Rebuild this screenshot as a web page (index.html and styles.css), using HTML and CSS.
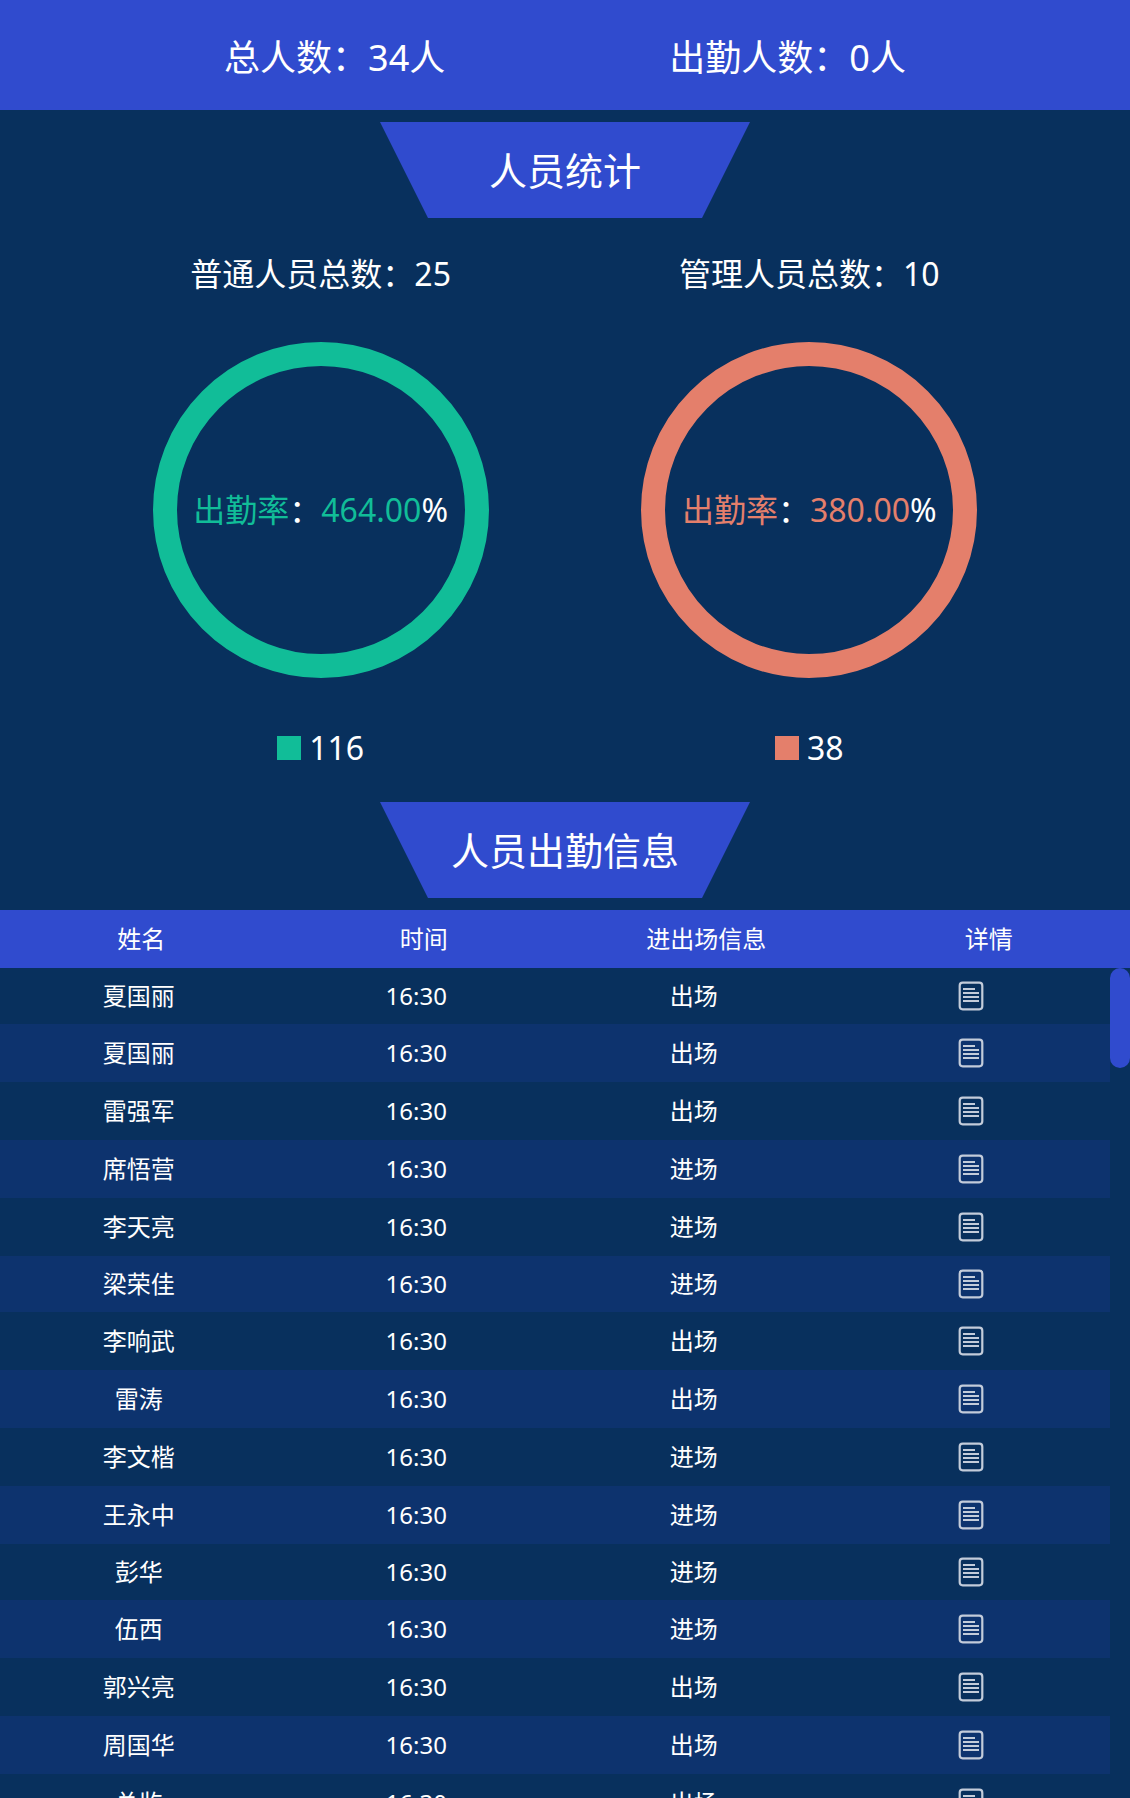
FILE: index.html
```html
<!DOCTYPE html>
<html lang="zh-CN">
<head>
<meta charset="utf-8">
<meta name="viewport" content="width=device-width, initial-scale=1">
<title>人员出勤信息</title>
<link rel="stylesheet" href="styles.css">
</head>
<body>
<svg class="sprite" aria-hidden="true">
  <symbol id="doc" viewBox="0 0 26 30">
    <rect x="1.7" y="1.7" width="22.6" height="26.6" rx="3" fill="none" stroke="currentColor" stroke-width="2.2"/>
    <path d="M5 8H17M5 12H21M5 16H21M5 20H21" fill="none" stroke="currentColor" stroke-width="2.2"/>
  </symbol>
</svg>
<header class="summary">
  <p>总人数：34人</p>
  <p>出勤人数：0人</p>
</header>
<main class="main">
  <h2 class="banner">人员统计</h2>
  <section class="stats">
    <div class="stat stat-green">
      <h3 class="stat-title">普通人员总数：25</h3>
      <div class="ring"><p><span class="tint">出勤率</span>：<span class="tint">464.00</span>%</p></div>
      <p class="legend"><i class="swatch"></i>116</p>
    </div>
    <div class="stat stat-coral">
      <h3 class="stat-title">管理人员总数：10</h3>
      <div class="ring"><p><span class="tint">出勤率</span>：<span class="tint">380.00</span>%</p></div>
      <p class="legend"><i class="swatch"></i>38</p>
    </div>
  </section>
  <h2 class="banner">人员出勤信息</h2>
  <div class="records">
    <table class="table">
      <thead>
        <tr><th>姓名</th><th>时间</th><th>进出场信息</th><th>详情</th></tr>
      </thead>
      <tbody>
        <tr><td>夏国丽</td><td>16:30</td><td>出场</td><td><button class="detail" aria-label="详情"><svg><use href="#doc"/></svg></button></td></tr>
        <tr><td>夏国丽</td><td>16:30</td><td>出场</td><td><button class="detail" aria-label="详情"><svg><use href="#doc"/></svg></button></td></tr>
        <tr><td>雷强军</td><td>16:30</td><td>出场</td><td><button class="detail" aria-label="详情"><svg><use href="#doc"/></svg></button></td></tr>
        <tr><td>席悟营</td><td>16:30</td><td>进场</td><td><button class="detail" aria-label="详情"><svg><use href="#doc"/></svg></button></td></tr>
        <tr><td>李天亮</td><td>16:30</td><td>进场</td><td><button class="detail" aria-label="详情"><svg><use href="#doc"/></svg></button></td></tr>
        <tr><td>梁荣佳</td><td>16:30</td><td>进场</td><td><button class="detail" aria-label="详情"><svg><use href="#doc"/></svg></button></td></tr>
        <tr><td>李响武</td><td>16:30</td><td>出场</td><td><button class="detail" aria-label="详情"><svg><use href="#doc"/></svg></button></td></tr>
        <tr><td>雷涛</td><td>16:30</td><td>出场</td><td><button class="detail" aria-label="详情"><svg><use href="#doc"/></svg></button></td></tr>
        <tr><td>李文楷</td><td>16:30</td><td>进场</td><td><button class="detail" aria-label="详情"><svg><use href="#doc"/></svg></button></td></tr>
        <tr><td>王永中</td><td>16:30</td><td>进场</td><td><button class="detail" aria-label="详情"><svg><use href="#doc"/></svg></button></td></tr>
        <tr><td>彭华</td><td>16:30</td><td>进场</td><td><button class="detail" aria-label="详情"><svg><use href="#doc"/></svg></button></td></tr>
        <tr><td>伍西</td><td>16:30</td><td>进场</td><td><button class="detail" aria-label="详情"><svg><use href="#doc"/></svg></button></td></tr>
        <tr><td>郭兴亮</td><td>16:30</td><td>出场</td><td><button class="detail" aria-label="详情"><svg><use href="#doc"/></svg></button></td></tr>
        <tr><td>周国华</td><td>16:30</td><td>出场</td><td><button class="detail" aria-label="详情"><svg><use href="#doc"/></svg></button></td></tr>
        <tr><td>总监</td><td>16:30</td><td>出场</td><td><button class="detail" aria-label="详情"><svg><use href="#doc"/></svg></button></td></tr>
      </tbody>
    </table>
    <div class="thumb"></div>
  </div>
</main>
</body>
</html>
```

FILE: styles.css
```css
* {
  box-sizing: border-box;
  margin: 0;
  padding: 0;
}

body {
  display: flex;
  flex-direction: column;
  height: 100vh;
  overflow: hidden;
  background: #08305d;
  color: #fff;
  font-family: "Noto Sans", "Noto Sans CJK SC", sans-serif;
  font-size: 24px;
}

h2,
h3,
th {
  font-weight: 400;
}

.sprite {
  display: none;
}

.summary {
  display: flex;
  flex: none;
  justify-content: space-evenly;
  align-items: center;
  height: 110px;
  background: #304bce;
  font-size: 36px;
}

.main {
  display: flex;
  flex: 1;
  flex-direction: column;
  min-height: 0;
  padding-top: 12px;
}

.banner {
  flex: none;
  align-self: center;
  width: 370px;
  background: #304bce;
  clip-path: polygon(0 0, 100% 0, calc(100% - 48px) 100%, 48px 100%);
  font-size: 38px;
  line-height: 96px;
  text-align: center;
}

.stats {
  display: flex;
  flex: none;
  justify-content: space-evenly;
  padding: 32px 0 30px;
  font-size: 32px;
  line-height: 48px;
}

.stat {
  width: 336px;
  text-align: center;
}

.stat-green {
  --tint: #11bd98;
}

.stat-coral {
  --tint: #e47f6b;
}

.stat-title {
  font-size: 32px;
}

.ring {
  display: flex;
  justify-content: center;
  align-items: center;
  height: 336px;
  margin: 44px 0 46px;
  border: 24px solid var(--tint);
  border-radius: 50%;
  white-space: nowrap;
}

.tint {
  color: var(--tint);
}

.legend {
  display: flex;
  justify-content: center;
  align-items: center;
  gap: 8px;
}

.swatch {
  width: 24px;
  height: 24px;
  background: var(--tint);
}

.records {
  position: relative;
  flex: 1;
  min-height: 0;
  margin-top: 12px;
  overflow: hidden;
}

.table,
.table thead,
.table tbody {
  display: block;
}

.table thead {
  background: #304bce;
}

.table tbody {
  padding-right: 20px;
}

.table tr {
  display: grid;
  grid-template-columns: repeat(4, 1fr);
  align-items: center;
  height: 58px;
  line-height: 36px;
  text-align: center;
}

.table tbody tr:nth-child(5n + 1) {
  height: 56px;
}

.table tbody tr:nth-child(even) {
  background: #0d336e;
}

.detail {
  display: block;
  width: 26px;
  height: 30px;
  margin: 0 auto;
  border: 0;
  background: none;
  color: #c3ccda;
  cursor: pointer;
}

.detail svg {
  display: block;
  width: 26px;
  height: 30px;
}

/* scrollbar thumb, level with the first table row */
.thumb {
  position: absolute;
  top: 58px;
  right: 0;
  width: 20px;
  height: 100px;
  border-radius: 10px;
  background: #304bce;
}
```
